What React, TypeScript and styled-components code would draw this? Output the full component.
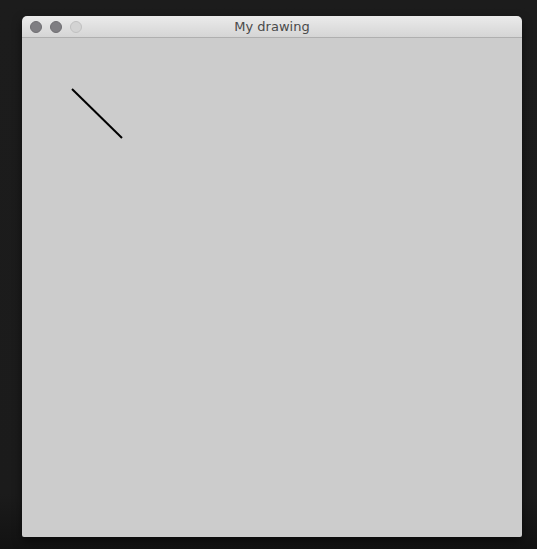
import React from "react";
import styled, { createGlobalStyle } from "styled-components";

const GlobalStyle = createGlobalStyle`
  html, body {
    margin: 0;
    padding: 0;
    background: #1b1b1b;
  }
  body {
    width: 537px;
    height: 549px;
    overflow: hidden;
  }
`;

const Desktop = styled.div`
  width: 537px;
  height: 549px;
  padding: 16px 15px 0 22px;
  box-sizing: border-box;
  background: linear-gradient(#1c1c1c 0%, #1b1b1b 90%, #121212 100%);
`;

const Window = styled.div`
  width: 500px;
  height: 521px;
  display: flex;
  flex-direction: column;
  border-radius: 5px 5px 2px 2px;
  overflow: hidden;
  box-shadow: 0 4px 10px rgba(0, 0, 0, 0.5);
`;

const TitleBar = styled.div`
  height: 21px;
  flex: none;
  display: flex;
  align-items: center;
  position: relative;
  padding-left: 8px;
  background: linear-gradient(#ebebeb, #d5d5d5);
  border-bottom: 1px solid #afafaf;
`;

const Lights = styled.div`
  display: flex;
  gap: 8px;
`;

const Light = styled.span<{ $off?: boolean }>`
  width: 12px;
  height: 12px;
  border-radius: 50%;
  box-sizing: border-box;
  background: ${(p) => (p.$off ? "#d3d3d3" : "#7f7e82")};
  border: 1px solid ${(p) => (p.$off ? "#c0c0c0" : "#6f6e72")};
`;

const Title = styled.div`
  position: absolute;
  left: 0;
  right: 0;
  top: 0;
  bottom: 0;
  display: flex;
  align-items: center;
  justify-content: center;
  font-family: "DejaVu Sans", "Liberation Sans", sans-serif;
  font-size: 13px;
  color: #4a4a4a;
  pointer-events: none;
`;

const Canvas = styled.div`
  flex: 1;
  background: #cccccc;
`;

export default function App() {
  return (
    <>
      <GlobalStyle />
      <Desktop>
        <Window>
          <TitleBar>
            <Lights>
              <Light />
              <Light />
              <Light $off />
            </Lights>
            <Title>My drawing</Title>
          </TitleBar>
          <Canvas>
            <svg width="500" height="499">
              <line x1="50" y1="51" x2="100" y2="100" stroke="#000" strokeWidth="2" />
            </svg>
          </Canvas>
        </Window>
      </Desktop>
    </>
  );
}
